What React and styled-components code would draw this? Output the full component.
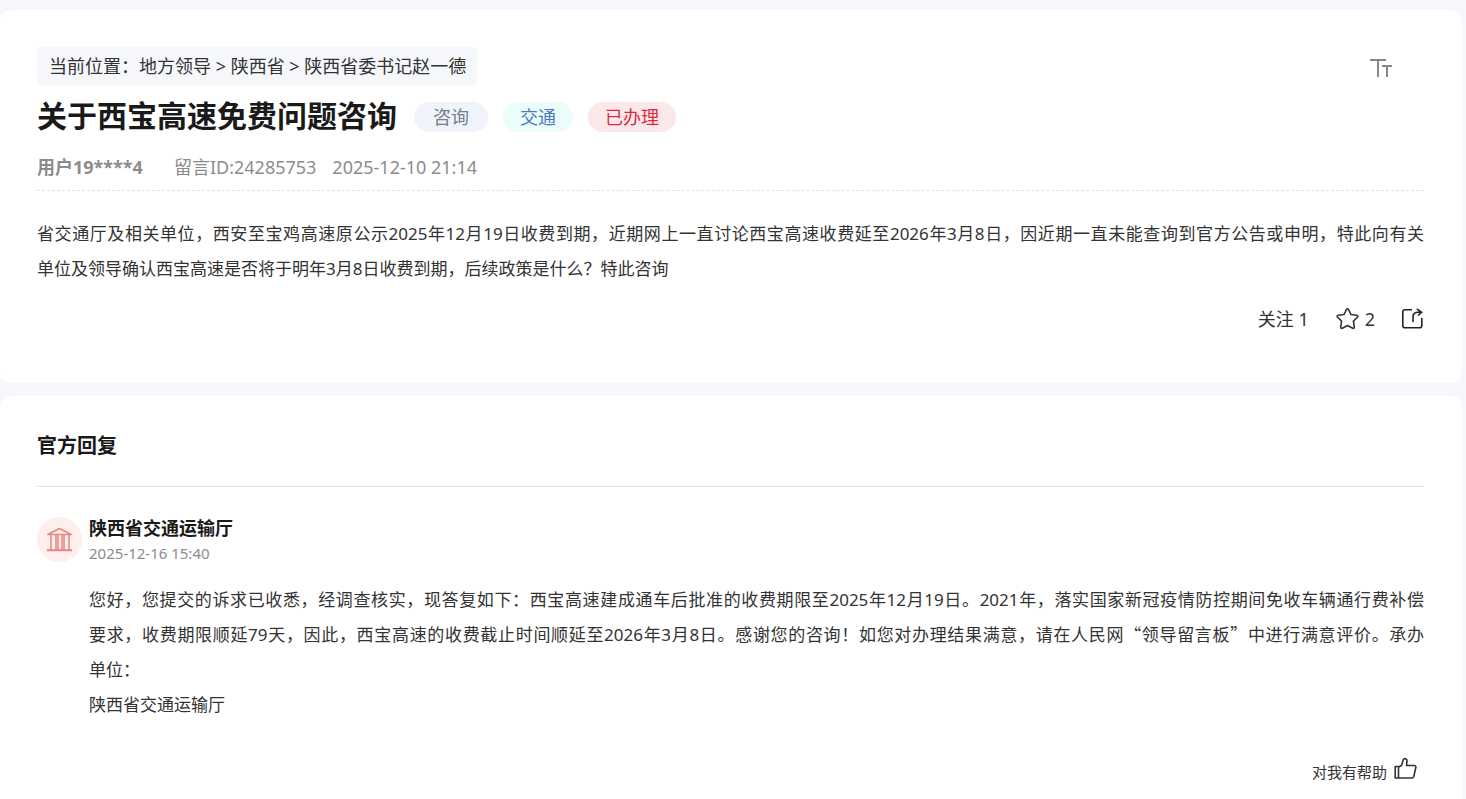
import React from 'react';
import styled, { createGlobalStyle } from 'styled-components';

const GlobalStyle = createGlobalStyle`
  * {
    box-sizing: border-box;
  }

  body {
    margin: 0;
    background-color: #f6f7fa;
    color: #333;
    font-family: "Noto Sans", "Noto Sans CJK SC", sans-serif;
    font-size: 18px;
  }

  h1, h2, h3, p {
    margin: 0;
  }

  button {
    display: flex;
    align-items: center;
    padding: 0;
    border: none;
    background: none;
    color: inherit;
    font: inherit;
    cursor: pointer;
  }
`;

const Page = styled.main`
  display: flex;
  flex-direction: column;
  gap: 13px;
  min-height: 100vh;
  padding: 10px 4px 0 0;
`;

const Card = styled.section`
  padding: 37px 38px 49px 37px;
  border-radius: 10px;
  background-color: #fff;
`;

const ReplyCard = styled(Card)`
  flex: 1;
  padding-top: 35px;
  padding-bottom: 10px;
  border-radius: 10px 10px 0 0;
`;

const TopBar = styled.div`
  display: flex;
  align-items: center;
  justify-content: space-between;
  padding-right: 32px;

  button {
    padding-top: 4px;
  }
`;

const Breadcrumb = styled.nav`
  padding: 0 11px 0 12px;
  border-radius: 3px;
  background-color: #f6f7fa;
  line-height: 38px;

  a {
    color: #333;
    text-decoration: none;
  }
`;

const TitleRow = styled.div`
  display: flex;
  flex-wrap: wrap;
  align-items: center;
  gap: 15px;
  margin-top: 12px;
`;

const Title = styled.h1`
  margin-right: 2px;
  padding-bottom: 2px;
  color: #1a1a1a;
  font-size: 30px;
  line-height: 38px;
`;

const tones = {
  gray: { color: '#708090', background: '#f0f3f9' },
  teal: { color: '#447bbf', background: '#ecfcfa' },
  red: { color: '#dc2840', background: '#fae8ea' },
};

const Tag = styled.span`
  min-width: ${(props) => (props.$tone === 'gray' ? '74px' : '0')};
  padding: 0 17px;
  border-radius: 15px;
  background-color: ${(props) => tones[props.$tone].background};
  color: ${(props) => tones[props.$tone].color};
  line-height: 30px;
  text-align: center;
`;

const Meta = styled.div`
  display: flex;
  flex-wrap: wrap;
  gap: 16px;
  margin-top: 15px;
  padding-bottom: 8px;
  border-bottom: 1px dashed #e4e4e4;
  color: #8c8c8c;
  line-height: 30px;

  strong {
    margin-right: 15px;
  }
`;

const Content = styled.p`
  margin-top: ${(props) => props.$top};
  font-size: 17px;
  line-height: 35px;
`;

const Line = styled.span`
  display: block;
  text-align: justify;
  text-align-last: ${(props) => (props.$full ? 'justify' : 'left')};
`;

const Quote = styled.span`
  font-family: "Noto Sans CJK SC", sans-serif;
  line-height: 1;
`;

const Actions = styled.div`
  display: flex;
  justify-content: flex-end;
  gap: 27px;
  margin-top: 18px;
  line-height: 30px;

  button {
    gap: 6px;
  }
`;

const ReplyHeading = styled.h2`
  padding-bottom: 25px;
  border-bottom: 1px solid #e4e4e4;
  color: #1a1a1a;
  font-size: 20px;
  line-height: 30px;
`;

const Reply = styled.article`
  display: grid;
  grid-template-columns: 45px 1fr;
  column-gap: 7px;
  margin-top: 30px;
`;

const Avatar = styled.div`
  display: flex;
  align-items: center;
  justify-content: center;
  width: 45px;
  height: 45px;
  border-radius: 50%;
  background-color: #ffeeee;
`;

const Department = styled.h3`
  color: #1a1a1a;
  font-size: 18px;
  line-height: 22px;
`;

const ReplyTime = styled.time`
  display: block;
  margin-top: 2px;
  color: #8c8c8c;
  font-size: 15px;
  line-height: 24px;
`;

const Helpful = styled.div`
  display: flex;
  justify-content: flex-end;
  margin-top: 35px;
  padding-right: 7px;
  font-size: 15px;
  line-height: 30px;

  button {
    align-items: flex-start;
    gap: 7px;
  }
`;

function FontSizeIcon() {
  return (
    <svg width="22" height="20" viewBox="0 0 22 20" fill="none" stroke="#8c8587" strokeWidth="2">
      <path d="M0 2h16M8 2v17" />
      <path d="M12 8h10M17 8v11" />
    </svg>
  );
}

function StarIcon() {
  return (
    <svg width="23" height="23" viewBox="0 0 23 23" fill="none" stroke="#333" strokeWidth="1.6" strokeLinejoin="round">
      <path d="M11.5 .8Q12.2 .8 12.6 1.7L14.9 6.5L20.6 7.3Q22.7 7.7 21.4 9.2L17.4 13.1L18.3 18.8Q18.4 20.9 16.7 20.2L11.5 17.5L6.3 20.2Q4.6 20.9 4.7 18.8L5.6 13.1L1.6 9.2Q.3 7.7 2.4 7.3L8.1 6.5L10.4 1.7Q10.8 .8 11.5 .8Z" />
    </svg>
  );
}

function ShareIcon() {
  return (
    <svg width="22" height="22" viewBox="0 0 22 22" fill="none" stroke="#222" strokeWidth="1.6">
      <path d="M10 1.8H3Q.8 1.8 .8 4V17.5Q.8 19.8 3 19.8H17.5Q19.8 19.8 19.8 17.5V10" />
      <path d="M11 14V9Q11 4.3 16 4.3H19.5M14.8 .8L19.6 4.3L16 7.5" />
    </svg>
  );
}

function HallIcon() {
  return (
    <svg width="26" height="26" viewBox="0 0 26 26" fill="none" stroke="#e98581" strokeWidth="1.5" strokeLinejoin="round">
      <path d="M.8 7.5L12.5 1.5L24.2 7.5Z" />
      <path d="M4 7.5V23M9 7.5V23M11 7.5V23M15 7.5V23M17 7.5V23M22 7.5V23" />
      <path d="M0 23.2H25" strokeWidth="2" />
    </svg>
  );
}

function ThumbIcon() {
  return (
    <svg width="23" height="23" viewBox="0 0 23 23" fill="none" stroke="#333" strokeWidth="1.6" strokeLinejoin="round">
      <path d="M1.2 9.5H4.5V21H1.2Z" />
      <path d="M4.5 10L7.5 8.5L9.2 3Q9.8 1.2 11.5 1.7Q13.3 2.3 13 4.3L12.5 8.5H20Q22.2 8.5 21.8 10.6L19.8 19.5Q19.4 21 18 21H4.5" />
    </svg>
  );
}

function App() {
  return (
    <>
      <GlobalStyle />
      <Page>
        <Card>
          <TopBar>
            <Breadcrumb>
              当前位置：<a href="#local">地方领导</a> &gt; <a href="#shaanxi">陕西省</a> &gt; <a href="#leader">陕西省委书记赵一德</a>
            </Breadcrumb>
            <button type="button" aria-label="字号"><FontSizeIcon /></button>
          </TopBar>

          <TitleRow>
            <Title>关于西宝高速免费问题咨询</Title>
            <Tag $tone="gray">咨询</Tag>
            <Tag $tone="teal">交通</Tag>
            <Tag $tone="red">已办理</Tag>
          </TitleRow>

          <Meta>
            <strong>用户19****4</strong>
            <span>留言ID:24285753</span>
            <time>2025-12-10 21:14</time>
          </Meta>

          <Content $top="25px">
            <Line $full>省交通厅及相关单位，西安至宝鸡高速原公示2025年12月19日收费到期，近期网上一直讨论西宝高速收费延至2026年3月8日，因近期一直未能查询到官方公告或申明，特此向有关</Line>
            <Line>单位及领导确认西宝高速是否将于明年3月8日收费到期，后续政策是什么？特此咨询</Line>
          </Content>

          <Actions>
            <button type="button">关注 1</button>
            <button type="button" aria-label="收藏 2"><StarIcon />2</button>
            <button type="button" aria-label="分享"><ShareIcon /></button>
          </Actions>
        </Card>

        <ReplyCard>
          <ReplyHeading>官方回复</ReplyHeading>
          <Reply>
            <Avatar><HallIcon /></Avatar>
            <div>
              <Department>陕西省交通运输厅</Department>
              <ReplyTime>2025-12-16 15:40</ReplyTime>
              <Content $top="17px">
                <Line $full>您好，您提交的诉求已收悉，经调查核实，现答复如下：西宝高速建成通车后批准的收费期限至2025年12月19日。2021年，落实国家新冠疫情防控期间免收车辆通行费补偿</Line>
                <Line $full>要求，收费期限顺延79天，因此，西宝高速的收费截止时间顺延至2026年3月8日。感谢您的咨询！如您对办理结果满意，请在人民网<Quote>“</Quote>领导留言板<Quote>”</Quote>中进行满意评价。承办</Line>
                <Line>单位：</Line>
                <Line>陕西省交通运输厅</Line>
              </Content>
            </div>
          </Reply>
          <Helpful>
            <button type="button">对我有帮助<ThumbIcon /></button>
          </Helpful>
        </ReplyCard>
      </Page>
    </>
  );
}

export default App;
